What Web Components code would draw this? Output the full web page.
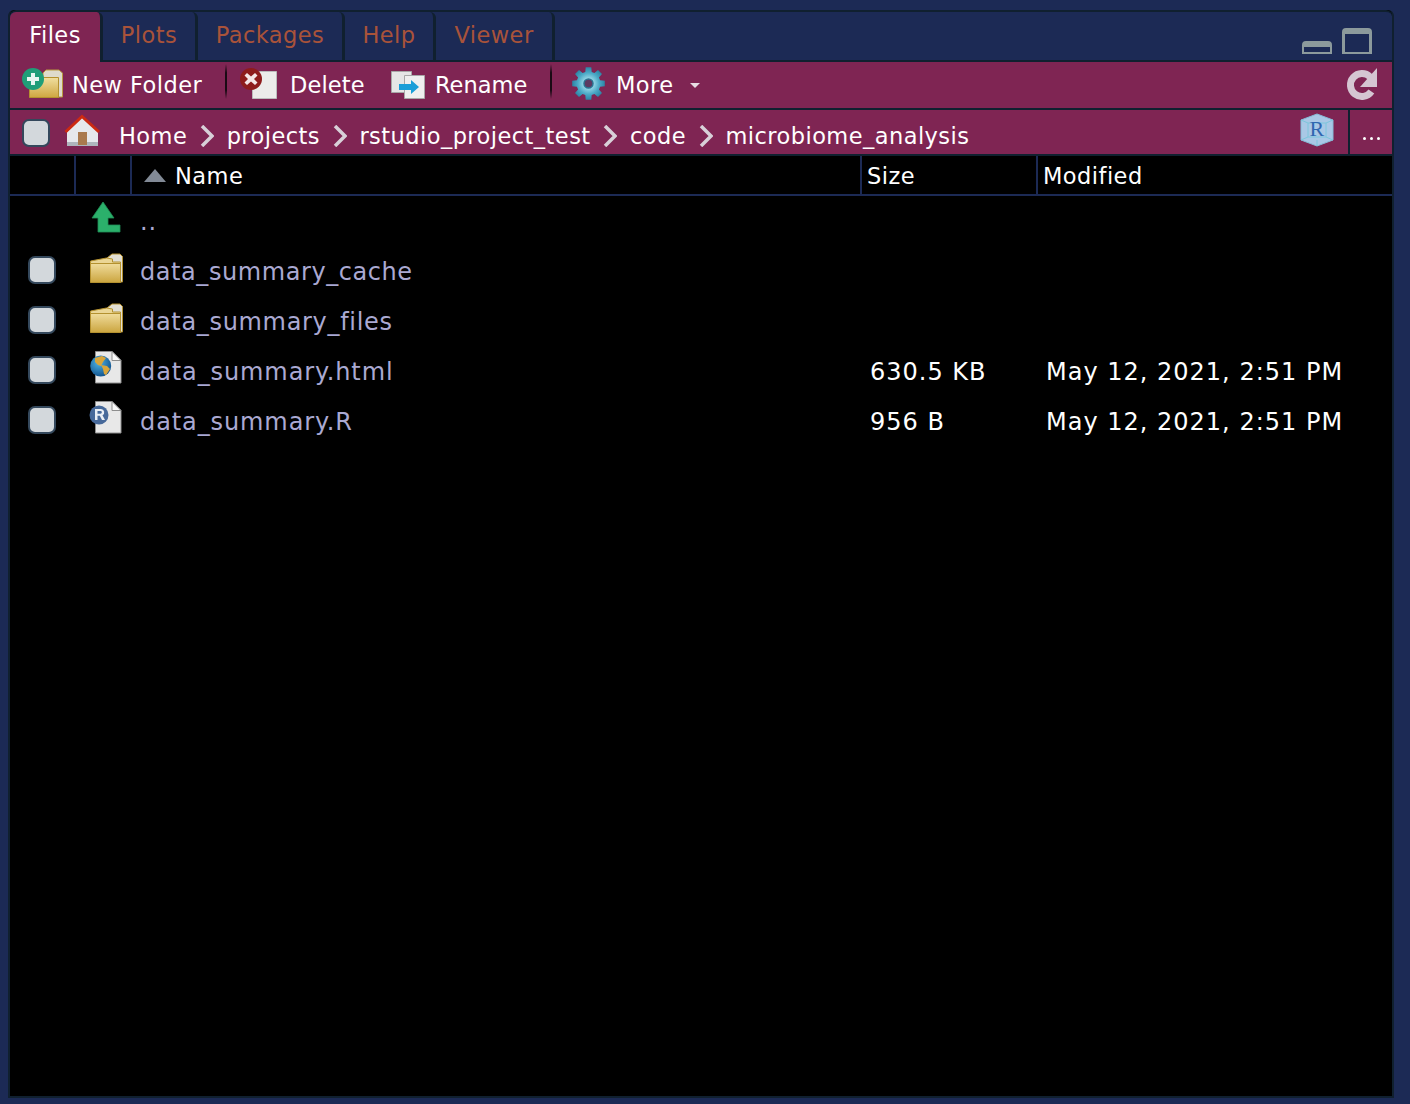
<!DOCTYPE html>
<html>
<head>
<meta charset="utf-8">
<title>Files</title>
<style>
    html, body { margin: 0; height: 100%; background: #1c2a55; }
    body { padding: 10px 16px 6px 8px; box-sizing: border-box; font-family: "DejaVu Sans", sans-serif; font-size: 24px; letter-spacing: 0.9px; }
</style>
</head>
<body>
<files-pane>
    <pane-tab slot="tabs" active>Files</pane-tab>
    <pane-tab slot="tabs" style="width:95px">Plots</pane-tab>
    <pane-tab slot="tabs" style="width:147px">Packages</pane-tab>
    <pane-tab slot="tabs" style="width:91px">Help</pane-tab>
    <pane-tab slot="tabs" style="width:119px">Viewer</pane-tab>

    <tool-button slot="tools" icon="newfolder" style="width:202px;--gap:8px">New Folder</tool-button>
    <tool-sep slot="tools"></tool-sep>
    <tool-button slot="tools" icon="delete" style="width:151px;--pad:13px;--gap:12px;letter-spacing:.12px">Delete</tool-button>
    <tool-button slot="tools" icon="rename" style="width:159px;--gap:9px;letter-spacing:0">Rename</tool-button>
    <tool-sep slot="tools"></tool-sep>
    <tool-button slot="tools" icon="more" menu style="width:160px;--pad:20px">More</tool-button>

    <path-bar slot="path" parts="Home,projects,rstudio_project_test,code,microbiome_analysis"></path-bar>

    <file-row slot="rows" icon="up" name=".." nocheck></file-row>
    <file-row slot="rows" icon="folder" name="data_summary_cache" style="--name-ls:.57px"></file-row>
    <file-row slot="rows" icon="folder" name="data_summary_files" style="--name-ls:.68px"></file-row>
    <file-row slot="rows" icon="html" name="data_summary.html" size="630.5 KB" modified="May 12, 2021, 2:51 PM"></file-row>
    <file-row slot="rows" icon="r" name="data_summary.R" size="956 B" modified="May 12, 2021, 2:51 PM"></file-row>
</files-pane>

<script>
// 8 tooth gear outline for the More button
function gearPath(cx, cy, outer, inner) {
    const pts = [];
    for (let i = 0; i < 8; i++) {
        const a = i * Math.PI / 4;
        [[-0.27, inner], [-0.17, outer], [0.17, outer], [0.27, inner]].forEach(([d, r]) => {
            pts.push((cx + r * Math.sin(a + d)).toFixed(1) + ' ' + (cy - r * Math.cos(a + d)).toFixed(1));
        });
    }
    return 'M' + pts.join('L') + 'z';
}

const ICONS = {
    newfolder: `<svg width="42" height="32" viewBox="0 0 42 32">
        <defs><linearGradient id="fa" x1="0" y1="0" x2="0" y2="1"><stop offset="0" stop-color="#f0dfa0"/><stop offset="1" stop-color="#cfa640"/></linearGradient></defs>
        <path d="M21 5l3-3h13l3.500 3v24H21z" fill="#dedbcc" stroke="#b99a3e"/>
        <path d="M7.500 9.500h29v20h-29z" fill="url(#fa)" stroke="#b4912f"/>
        <circle cx="11" cy="11" r="11" fill="#1f9e78"/>
        <path d="M9 5h4v4h4v4h-4v4H9v-4H5V9h4z" fill="#e8f6f0"/>
    </svg>`,
    delete: `<svg width="38" height="32" viewBox="0 0 38 32">
        <path d="M12.500 3.500h24v27h-24z" fill="#ececea" stroke="#bcbcbc"/>
        <circle cx="11" cy="11" r="11" fill="#8e1c1c"/>
        <path d="M7 5l4 3.500L15 5l2.500 2.500L14 11l3.500 3.500L15 17l-4-3.500L7 17l-2.500-2.500L8 11 4.500 7.500z" fill="#f4e6e6"/>
    </svg>`,
    rename: `<svg width="36" height="32" viewBox="0 0 36 32">
        <path d="M1.500 3.500h20v21h-20z" fill="#e6e6e6" stroke="#a8a8a8"/>
        <path d="M14.500 7.500h20v23h-20z" fill="#efefef" stroke="#a8a8a8"/>
        <path d="M9 16h12v-4l8 7-8 7v-4H9z" fill="#1b9ed8"/>
    </svg>`,
    more: `<svg width="34" height="34" viewBox="0 0 34 34">
        <defs><radialGradient id="gr" cx=".5" cy=".5" r=".55"><stop offset=".2" stop-color="#a5e0ee"/><stop offset=".6" stop-color="#4ba9c6"/><stop offset="1" stop-color="#237a9c"/></radialGradient></defs>
        <path fill="url(#gr)" d="${gearPath(16.5, 16.5, 16.5, 12)}"/>
        <circle cx="16.500" cy="16.500" r="4.500" fill="#5d3a62" stroke="#2a7392" stroke-width="1.500"/>
    </svg>`,
    home: `<svg width="38" height="34" viewBox="0 0 38 34">
        <path d="M3 19L18 4l16 15v14H3z" fill="#e6e8ec"/>
        <path d="M3 29h31v4H3z" fill="#aeb4bc"/>
        <path d="M14 19h9v13h-9z" fill="#a9794e"/>
        <path d="M1.500 19L18 3.500 35 19" fill="none" stroke="#cc2a12" stroke-width="3"/>
    </svg>`,
    up: `<svg width="32" height="32" viewBox="0 1 32 32" style="overflow:visible">
        <path d="M14 0l11 16h-6v7h12v7H9V16H3z" fill="#2bb06b" stroke="#1f8e55" stroke-width=".8"/>
    </svg>`,
    folder: `<svg width="34" height="32" viewBox="0 0 34 32">
        <defs><linearGradient id="fb" x1="0" y1="0" x2="0" y2="1"><stop offset="0" stop-color="#f0dc9c"/><stop offset="1" stop-color="#cba53f"/></linearGradient></defs>
        <path d="M18 5l5-4h8l2.500 2.500V29H18z" fill="#e2dfd4" stroke="#b4912f"/>
        <path d="M1.500 8l16-3 6 1v3h8v20h-30z" fill="#ebd695" stroke="#b4912f"/>
        <path d="M1.500 10.500h30v19h-30z" fill="url(#fb)" stroke="#b4912f"/>
    </svg>`,
    html: `<svg width="34" height="34" viewBox="0 2 34 34" style="overflow:visible">
        <defs><radialGradient id="gl" cx=".4" cy=".35" r=".7"><stop offset="0" stop-color="#4fb3e4"/><stop offset="1" stop-color="#0f4f8a"/></radialGradient></defs>
        <path d="M6.500 1.500H23l9 9v22.500H6.500z" fill="#e8e8e8" stroke="#8e8e8e"/>
        <path d="M23 1.500v9h9z" fill="#fafafa" stroke="#8e8e8e"/>
        <circle cx="11.700" cy="16" r="10.500" fill="url(#gl)"/>
        <path d="M6 8l7-2 4 2-3 4-2 4-3-1-3-3zM12 15l6 1 3 3-4 6-2-1-1-5z" fill="#d9a53a"/>
    </svg>`,
    r: `<svg width="34" height="34" viewBox="0 2 34 34" style="overflow:visible">
        <path d="M6.500 1.500H23l9 9v22.500H6.500z" fill="#e8e8e8" stroke="#8e8e8e"/>
        <path d="M23 1.500v9h9z" fill="#fafafa" stroke="#8e8e8e"/>
        <circle cx="10" cy="15" r="9.500" fill="#47699a"/>
        <path d="M6 9h6a3.300 3.300 0 0 1 1.500 6.200L16 20h-3l-2.200-4.300H8.500V20H6zM8.500 11v2.700h3a1.350 1.350 0 0 0 0-2.700z" fill="#e9eef5"/>
    </svg>`
};

// Whole pane: tab strip, toolbar, path bar and the file table
class FilesPane extends HTMLElement {
    constructor() {
        super();
        const root = this.attachShadow({mode: 'open'});
        root.innerHTML = `
            <style>
                :host { display: flex; flex-direction: column; height: 100%; box-sizing: border-box; background: #000; border: 2px solid #10202f; border-top: 0; border-radius: 6px 6px 0 0; }
                .tabs { display: flex; align-items: stretch; height: 52px; box-sizing: border-box; background: #1c2a55; border-top: 2px solid #10202f; border-radius: 6px 6px 0 0; }
                .tabs ::slotted(*) { flex: none; }
                .win { flex: 1; display: flex; justify-content: flex-end; align-items: flex-end; gap: 10px; padding: 0 20px 6px 0; border-bottom: 2px solid #10202f; }
                .min { width: 26px; height: 5px; border: 2px solid #8c9a9c; border-width: 6px 2px 2px; border-radius: 4px 4px 0 0; }
                .max { width: 24px; height: 18px; border: 3px solid #8c9a9c; border-width: 6px 3px 2px; border-radius: 4px 4px 0 0; }
                .tools { display: flex; align-items: center; height: 46px; background: #7f2553; border-bottom: 2px solid #10202f; }
                .refresh { margin-left: auto; margin-right: 14px; display: flex; margin-top: -2px; }
                .path { display: block; }
                .head { display: grid; grid-template-columns: 66px 56px 730px 176px 1fr; height: 38px; border-bottom: 2px solid #1c2a55; color: #fff; font-size: 22.5px; letter-spacing: .45px; }
                .head div { display: flex; align-items: center; box-sizing: border-box; border-right: 2px solid #1c2a55; padding-left: 5px; padding-top: 1px; }
                .head div:last-child { border-right: 0; }
                .head .name { padding-left: 12px; gap: 9px; }
                .tri { width: 0; height: 0; border: 11px solid transparent; border-top: 0; border-bottom: 13px solid #828a96; }
                .rows { flex: 1; }
            </style>
            <div class="tabs">
                <slot name="tabs"></slot>
                <div class="win"><div class="min"></div><div class="max"></div></div>
            </div>
            <div class="tools">
                <slot name="tools"></slot>
                <span class="refresh">
                    <svg width="32" height="34" viewBox="0 0 32 34">
                        <path d="M24.100 9.900A11.500 11.500 0 1 0 25.400 24.600" fill="none" stroke="#d5c6d2" stroke-width="7"/>
                        <path d="M31 1v19H14z" fill="#d5c6d2"/>
                    </svg>
                </span>
            </div>
            <div class="path"><slot name="path"></slot></div>
            <div class="head">
                <div></div><div></div>
                <div class="name"><span class="tri"></span><span>Name</span></div>
                <div>Size</div>
                <div>Modified</div>
            </div>
            <div class="rows"><slot name="rows"></slot></div>
        `;
    }
}

class PaneTab extends HTMLElement {
    constructor() {
        super();
        const root = this.attachShadow({mode: 'open'});
        root.innerHTML = `
            <style>
                :host { display: flex; align-items: center; justify-content: center; box-sizing: border-box; width: 93px; height: 100%; padding-bottom: 2px; color: #a9533a; border-right: 3px solid #10202f; border-bottom: 2px solid #10202f; border-radius: 6px 6px 0 0; font-size: 22.5px; letter-spacing: .45px; }
                :host([active]) { background: #7f2553; color: #fff; border-bottom: 0; padding-bottom: 4px; }
            </style>
            <slot></slot>
        `;
    }
}

class ToolButton extends HTMLElement {
    constructor() {
        super();
        const root = this.attachShadow({mode: 'open'});
        const caret = this.hasAttribute('menu') ? '<span class="caret"></span>' : '';
        root.innerHTML = `
            <style>
                :host { display: flex; align-items: center; box-sizing: border-box; gap: var(--gap, 10px); padding-left: var(--pad, 12px); height: 100%; color: #fff; flex: none; white-space: nowrap; font-size: 22.5px; letter-spacing: .45px; }
                svg { display: block; flex: none; margin-top: -2px; }
                .caret { width: 0; height: 0; border: 5px solid transparent; border-top: 5px solid #e8dce4; border-bottom: 0; margin-left: 6px; }
            </style>
            ${ICONS[this.getAttribute('icon')]}
            <slot></slot>${caret}
        `;
    }
}

class ToolSep extends HTMLElement {
    constructor() {
        super();
        this.attachShadow({mode: 'open'}).innerHTML = `
            <style>
                :host { display: block; flex: none; width: 2px; height: 35px; margin: 0 0 7px 13px; background: linear-gradient(#7f2553, #1a0a14 25%, #1a0a14 75%, #7f2553); }
            </style>
        `;
    }
}

class PathBar extends HTMLElement {
    constructor() {
        super();
        const root = this.attachShadow({mode: 'open'});
        const parts = this.getAttribute('parts').split(',');
        const chevron = `<svg class="chev" width="14" height="22" viewBox="0 0 14 22"><path d="M2 1l10 10L2 21" fill="none" stroke="#d8d0d8" stroke-width="3.500"/></svg>`;
        const crumbs = parts.map(p => `<span>${p}</span>`).join(chevron);
        root.innerHTML = `
            <style>
                :host { display: flex; align-items: center; height: 46px; box-sizing: border-box; background: #7f2553; border-bottom: 2px solid #10202f; color: #fff; font-size: 22.5px; letter-spacing: .45px; }
                .box { flex: none; box-sizing: border-box; width: 28px; height: 28px; margin: 1px 0 0 12px; border: 2px solid #34485c; border-radius: 7px; background: #d3d8dc; }
                .home { flex: none; display: flex; margin: -4px 0 0 14px; }
                .crumbs { display: flex; align-items: center; gap: 12.700px; margin-left: 17px; padding-top: 7px; flex: 1; }
                .chev { flex: none; }
                .proj { flex: none; display: flex; margin: -4px 14px 0 0; }
                .dots { flex: none; align-self: stretch; width: 44px; box-sizing: border-box; border-left: 2px solid #10202f; display: flex; justify-content: center; align-items: center; gap: 4px; padding-top: 12px; }
                .dots i { width: 3px; height: 3px; border-radius: 50%; background: #fff; }
            </style>
            <span class="box"></span>
            <span class="home">${ICONS.home}</span>
            <div class="crumbs">${crumbs}</div>
            <span class="proj">
                <svg width="34" height="34" viewBox="0 0 34 34">
                    <path d="M17 1l16 6v20l-16 6-16-6V7z" fill="#a9c8e6" stroke="#86bcd8"/>
                    <path d="M1 7l7 3h18l7-3M8 10v14l-7 3M26 10v14l7 3M8 24h18M17 33v-6" fill="none" stroke="#7cc6dc"/>
                    <text x="17" y="23" text-anchor="middle" font-family="Liberation Serif" font-size="22" fill="#2f66b0">R</text>
                </svg>
            </span>
            <span class="dots"><i></i><i></i><i></i></span>
        `;
    }
}

// One line of the file table
class FileRow extends HTMLElement {
    constructor() {
        super();
        const root = this.attachShadow({mode: 'open'});
        const g = n => this.getAttribute(n) || '';
        const box = this.hasAttribute('nocheck') ? '' : '<span class="box"></span>';
        root.innerHTML = `
            <style>
                :host { display: grid; grid-template-columns: 65px 56px 738px 176px 1fr; align-items: center; height: 50px; color: #fff; }
                .box { display: block; box-sizing: border-box; width: 28px; height: 28px; margin: -2px 0 0 18px; border: 2px solid #34485c; border-radius: 7px; background: #d3d8dc; }
                .icon { display: flex; margin: -4px 0 0 14px; }
                .name { color: #aaa9d2; padding: 2px 0 0 9px; letter-spacing: var(--name-ls, .9px); }
                .size, .mod { padding-top: 2px; letter-spacing: 1px; }
                .size { padding-left: 1px; }
                .mod { padding-left: 1px; }
            </style>
            <div>${box}</div>
            <div class="icon">${ICONS[g('icon')]}</div>
            <div class="name">${g('name')}</div>
            <div class="size">${g('size')}</div>
            <div class="mod">${g('modified')}</div>
        `;
    }
}

customElements.define('files-pane', FilesPane);
customElements.define('pane-tab', PaneTab);
customElements.define('tool-button', ToolButton);
customElements.define('tool-sep', ToolSep);
customElements.define('path-bar', PathBar);
customElements.define('file-row', FileRow);
</script>
</body>
</html>
